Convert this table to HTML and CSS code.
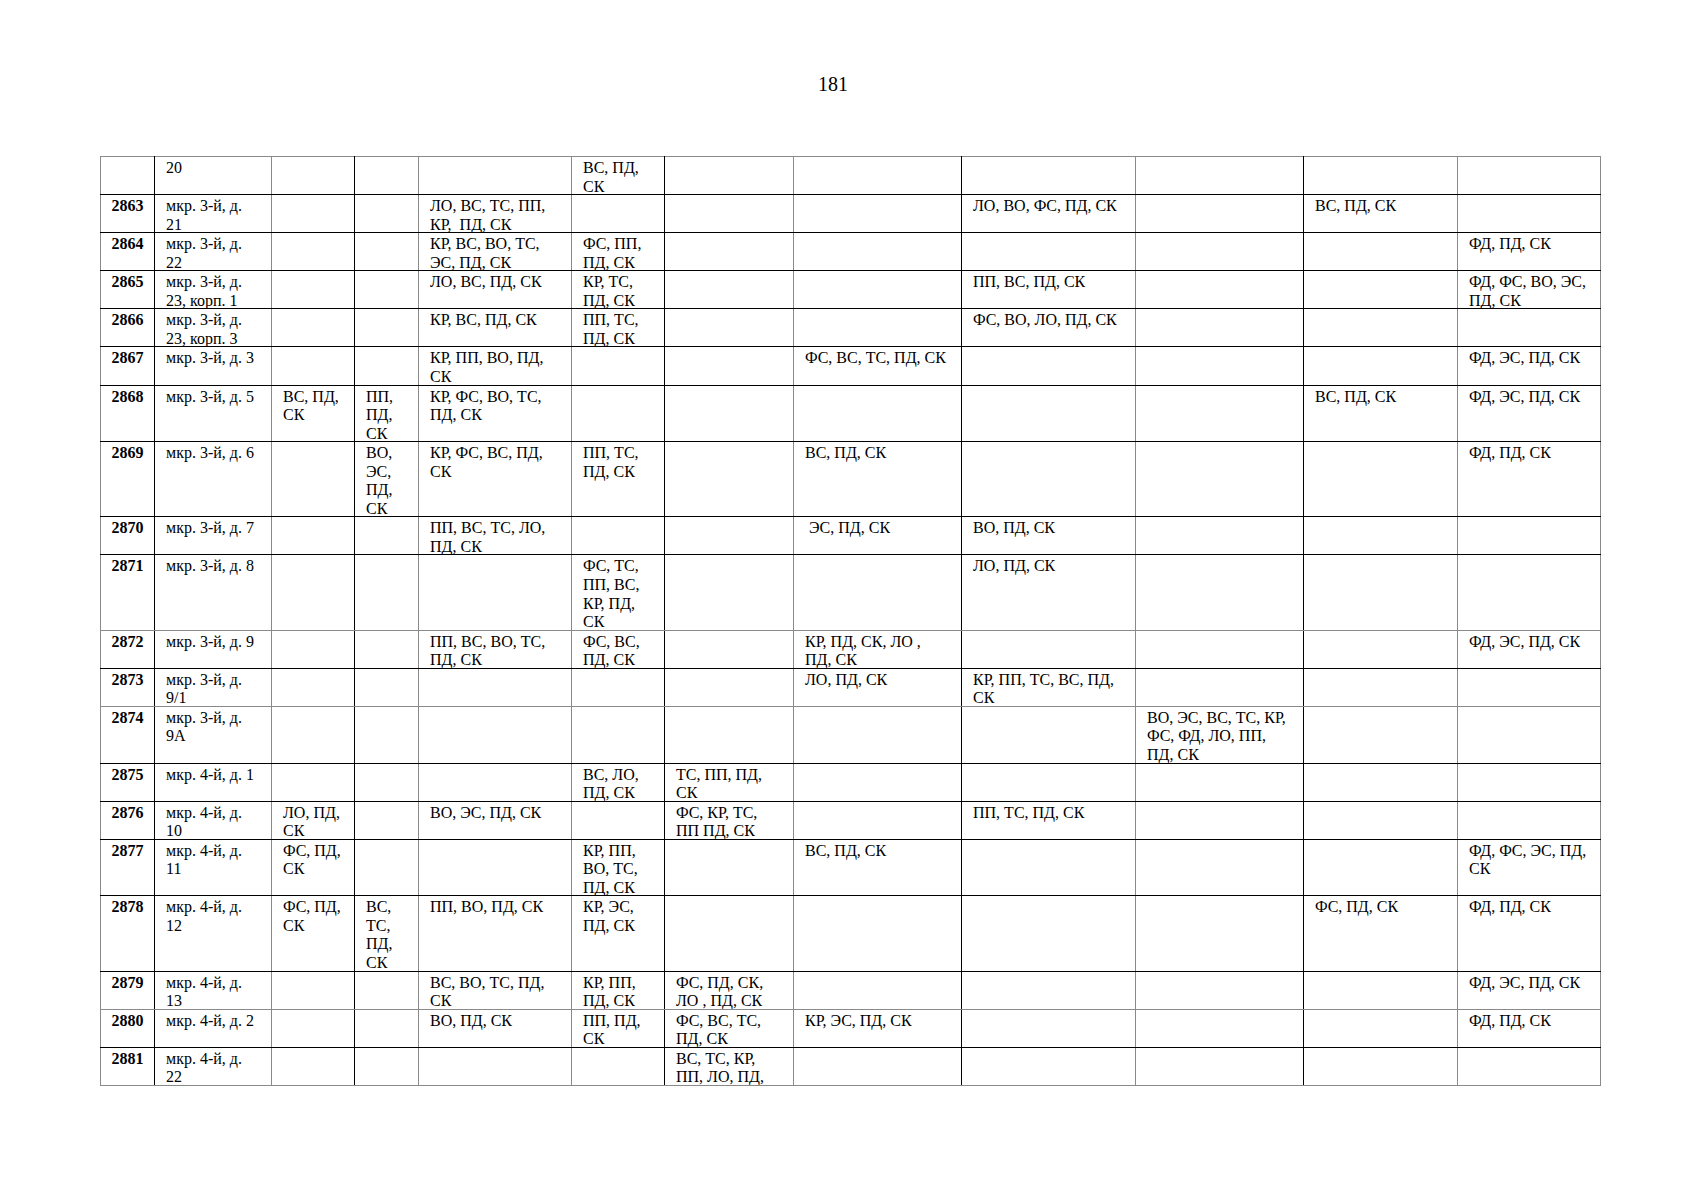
FILE: index.html
```html
<!DOCTYPE html>
<html lang="ru">
<head>
<meta charset="utf-8">
<title>181</title>
<link rel="stylesheet" href="styles.css">
</head>
<body>
<div class="page">
  <header class="page-head"><span class="folio">181</span></header>
  <table class="sheet">
    <colgroup>
      <col class="c1"><col class="c2"><col class="c3"><col class="c4"><col class="c5"><col class="c6">
      <col class="c7"><col class="c8"><col class="c9"><col class="c10"><col class="c11"><col class="c12">
    </colgroup>
    <tbody>
      <tr class="first">
        <td></td><td><div class="tx">20</div></td><td></td><td></td><td></td><td><div class="tx">ВС, ПД,<br>СК</div></td><td></td><td></td><td></td><td></td><td></td><td></td>
      </tr>
      <tr>
        <td><div class="tx">2863</div></td><td><div class="tx">мкр. 3-й, д.<br>21</div></td><td></td><td></td><td><div class="tx">ЛО, ВС, ТС, ПП,<br>КР,&nbsp; ПД, СК</div></td><td></td><td></td><td></td><td><div class="tx">ЛО, ВО, ФС, ПД, СК</div></td><td></td><td><div class="tx">ВС, ПД, СК</div></td><td></td>
      </tr>
      <tr>
        <td><div class="tx">2864</div></td><td><div class="tx">мкр. 3-й, д.<br>22</div></td><td></td><td></td><td><div class="tx">КР, ВС, ВО, ТС,<br>ЭС, ПД, СК</div></td><td><div class="tx">ФС, ПП,<br>ПД, СК</div></td><td></td><td></td><td></td><td></td><td></td><td><div class="tx">ФД, ПД, СК</div></td>
      </tr>
      <tr>
        <td><div class="tx">2865</div></td><td><div class="tx">мкр. 3-й, д.<br>23, корп. 1</div></td><td></td><td></td><td><div class="tx">ЛО, ВС, ПД, СК</div></td><td><div class="tx">КР, ТС,<br>ПД, СК</div></td><td></td><td></td><td><div class="tx">ПП, ВС, ПД, СК</div></td><td></td><td></td><td><div class="tx">ФД, ФС, ВО, ЭС,<br>ПД, СК</div></td>
      </tr>
      <tr>
        <td><div class="tx">2866</div></td><td><div class="tx">мкр. 3-й, д.<br>23, корп. 3</div></td><td></td><td></td><td><div class="tx">КР, ВС, ПД, СК</div></td><td><div class="tx">ПП, ТС,<br>ПД, СК</div></td><td></td><td></td><td><div class="tx">ФС, ВО, ЛО, ПД, СК</div></td><td></td><td></td><td></td>
      </tr>
      <tr>
        <td><div class="tx">2867</div></td><td><div class="tx">мкр. 3-й, д. 3</div></td><td></td><td></td><td><div class="tx">КР, ПП, ВО, ПД,<br>СК</div></td><td></td><td></td><td><div class="tx">ФС, ВС, ТС, ПД, СК</div></td><td></td><td></td><td></td><td><div class="tx">ФД, ЭС, ПД, СК</div></td>
      </tr>
      <tr>
        <td><div class="tx">2868</div></td><td><div class="tx">мкр. 3-й, д. 5</div></td><td><div class="tx">ВС, ПД,<br>СК</div></td><td><div class="tx">ПП,<br>ПД,<br>СК</div></td><td><div class="tx">КР, ФС, ВО, ТС,<br>ПД, СК</div></td><td></td><td></td><td></td><td></td><td></td><td><div class="tx">ВС, ПД, СК</div></td><td><div class="tx">ФД, ЭС, ПД, СК</div></td>
      </tr>
      <tr>
        <td><div class="tx">2869</div></td><td><div class="tx">мкр. 3-й, д. 6</div></td><td></td><td><div class="tx">ВО,<br>ЭС,<br>ПД,<br>СК</div></td><td><div class="tx">КР, ФС, ВС, ПД,<br>СК</div></td><td><div class="tx">ПП, ТС,<br>ПД, СК</div></td><td></td><td><div class="tx">ВС, ПД, СК</div></td><td></td><td></td><td></td><td><div class="tx">ФД, ПД, СК</div></td>
      </tr>
      <tr>
        <td><div class="tx">2870</div></td><td><div class="tx">мкр. 3-й, д. 7</div></td><td></td><td></td><td><div class="tx">ПП, ВС, ТС, ЛО,<br>ПД, СК</div></td><td></td><td></td><td><div class="tx">&nbsp;ЭС, ПД, СК</div></td><td><div class="tx">ВО, ПД, СК</div></td><td></td><td></td><td></td>
      </tr>
      <tr class="g">
        <td><div class="tx">2871</div></td><td><div class="tx">мкр. 3-й, д. 8</div></td><td></td><td></td><td></td><td><div class="tx">ФС, ТС,<br>ПП, ВС,<br>КР, ПД,<br>СК</div></td><td></td><td></td><td><div class="tx">ЛО, ПД, СК</div></td><td></td><td></td><td></td>
      </tr>
      <tr>
        <td><div class="tx">2872</div></td><td><div class="tx">мкр. 3-й, д. 9</div></td><td></td><td></td><td><div class="tx">ПП, ВС, ВО, ТС,<br>ПД, СК</div></td><td><div class="tx">ФС, ВС,<br>ПД, СК</div></td><td></td><td><div class="tx">КР, ПД, СК, ЛО ,<br>ПД, СК</div></td><td></td><td></td><td></td><td><div class="tx">ФД, ЭС, ПД, СК</div></td>
      </tr>
      <tr class="g">
        <td><div class="tx">2873</div></td><td><div class="tx">мкр. 3-й, д.<br>9/1</div></td><td></td><td></td><td></td><td></td><td></td><td><div class="tx">ЛО, ПД, СК</div></td><td><div class="tx">КР, ПП, ТС, ВС, ПД,<br>СК</div></td><td></td><td></td><td></td>
      </tr>
      <tr>
        <td><div class="tx">2874</div></td><td><div class="tx">мкр. 3-й, д.<br>9А</div></td><td></td><td></td><td></td><td></td><td></td><td></td><td></td><td><div class="tx">ВО, ЭС, ВС, ТС, КР,<br>ФС, ФД, ЛО, ПП,<br>ПД, СК</div></td><td></td><td></td>
      </tr>
      <tr>
        <td><div class="tx">2875</div></td><td><div class="tx">мкр. 4-й, д. 1</div></td><td></td><td></td><td></td><td><div class="tx">ВС, ЛО,<br>ПД, СК</div></td><td><div class="tx">ТС, ПП, ПД,<br>СК</div></td><td></td><td></td><td></td><td></td><td></td>
      </tr>
      <tr>
        <td><div class="tx">2876</div></td><td><div class="tx">мкр. 4-й, д.<br>10</div></td><td><div class="tx">ЛО, ПД,<br>СК</div></td><td></td><td><div class="tx">ВО, ЭС, ПД, СК</div></td><td></td><td><div class="tx">ФС, КР, ТС,<br>ПП ПД, СК</div></td><td></td><td><div class="tx">ПП, ТС, ПД, СК</div></td><td></td><td></td><td></td>
      </tr>
      <tr>
        <td><div class="tx">2877</div></td><td><div class="tx">мкр. 4-й, д.<br>11</div></td><td><div class="tx">ФС, ПД,<br>СК</div></td><td></td><td></td><td><div class="tx">КР, ПП,<br>ВО, ТС,<br>ПД, СК</div></td><td></td><td><div class="tx">ВС, ПД, СК</div></td><td></td><td></td><td></td><td><div class="tx">ФД, ФС, ЭС, ПД,<br>СК</div></td>
      </tr>
      <tr>
        <td><div class="tx">2878</div></td><td><div class="tx">мкр. 4-й, д.<br>12</div></td><td><div class="tx">ФС, ПД,<br>СК</div></td><td><div class="tx">ВС,<br>ТС,<br>ПД,<br>СК</div></td><td><div class="tx">ПП, ВО, ПД, СК</div></td><td><div class="tx">КР, ЭС,<br>ПД, СК</div></td><td></td><td></td><td></td><td></td><td><div class="tx">ФС, ПД, СК</div></td><td><div class="tx">ФД, ПД, СК</div></td>
      </tr>
      <tr class="g">
        <td><div class="tx">2879</div></td><td><div class="tx">мкр. 4-й, д.<br>13</div></td><td></td><td></td><td><div class="tx">ВС, ВО, ТС, ПД,<br>СК</div></td><td><div class="tx">КР, ПП,<br>ПД, СК</div></td><td><div class="tx">ФС, ПД, СК,<br>ЛО , ПД, СК</div></td><td></td><td></td><td></td><td></td><td><div class="tx">ФД, ЭС, ПД, СК</div></td>
      </tr>
      <tr>
        <td><div class="tx">2880</div></td><td><div class="tx">мкр. 4-й, д. 2</div></td><td></td><td></td><td><div class="tx">ВО, ПД, СК</div></td><td><div class="tx">ПП, ПД,<br>СК</div></td><td><div class="tx">ФС, ВС, ТС,<br>ПД, СК</div></td><td><div class="tx">КР, ЭС, ПД, СК</div></td><td></td><td></td><td></td><td><div class="tx">ФД, ПД, СК</div></td>
      </tr>
      <tr class="g">
        <td><div class="tx">2881</div></td><td><div class="tx">мкр. 4-й, д.<br>22</div></td><td></td><td></td><td></td><td></td><td><div class="tx">ВС, ТС, КР,<br>ПП, ЛО, ПД,</div></td><td></td><td></td><td></td><td></td><td></td>
      </tr>
    </tbody>
  </table>
</div>
</body>
</html>
```

FILE: styles.css
```css
html, body {
  margin: 0;
  padding: 0;
  background: #fff;
}

body {
  width: 1697px;
  min-height: 1200px;
  font-family: "Liberation Serif", "Times New Roman", serif;
  color: #000;
}

.page {
  display: flex;
  flex-direction: column;
  padding-left: 100px;
}

.page-head {
  box-sizing: border-box;
  height: 156px;
  padding-top: 73px;
  padding-right: 131px;
  text-align: center;
  font-size: 20px;
  line-height: 23px;
}

.sheet {
  width: 1500px;
  table-layout: fixed;
  border-collapse: collapse;
  font-size: 16px;
  line-height: 18.55px;
}

.c1 { width: 54px; }
.c2 { width: 117px; }
.c3 { width: 83px; }
.c4 { width: 64px; }
.c5 { width: 153px; }
.c6 { width: 93px; }
.c7 { width: 129px; }
.c8 { width: 168px; }
.c9 { width: 174px; }
.c10 { width: 168px; }
.c11 { width: 154px; }
.c12 { width: 143px; }

.sheet td {
  border: 1px solid #000;
  padding: 0 4px 0 11px;
  vertical-align: top;
  text-align: left;
  white-space: nowrap;
  overflow: hidden;
}

/* text sits a little low in its line, as in the printed sheet */
.tx {
  padding-top: 2px;
  margin-bottom: -2px;
}

.sheet td:nth-child(1) {
  font-weight: bold;
  text-align: center;
  padding: 0;
  border-left-color: #8a8a8a;
}

.sheet td:nth-child(2) { border-right-color: #8a8a8a; }
.sheet td:nth-child(4) { border-right-color: #8a8a8a; }
.sheet td:nth-child(5) { border-right-color: #8a8a8a; }
.sheet td:nth-child(7) { border-right-color: #8a8a8a; }
.sheet td:nth-child(9) { border-right-color: #8a8a8a; }
.sheet td:nth-child(11) { border-right-color: #8a8a8a; }
.sheet td:nth-child(12) { border-right-color: #8a8a8a; }

.sheet tr.first td { border-top-color: #8a8a8a; }
.sheet tr.g td { border-bottom-color: #8a8a8a; }
```
